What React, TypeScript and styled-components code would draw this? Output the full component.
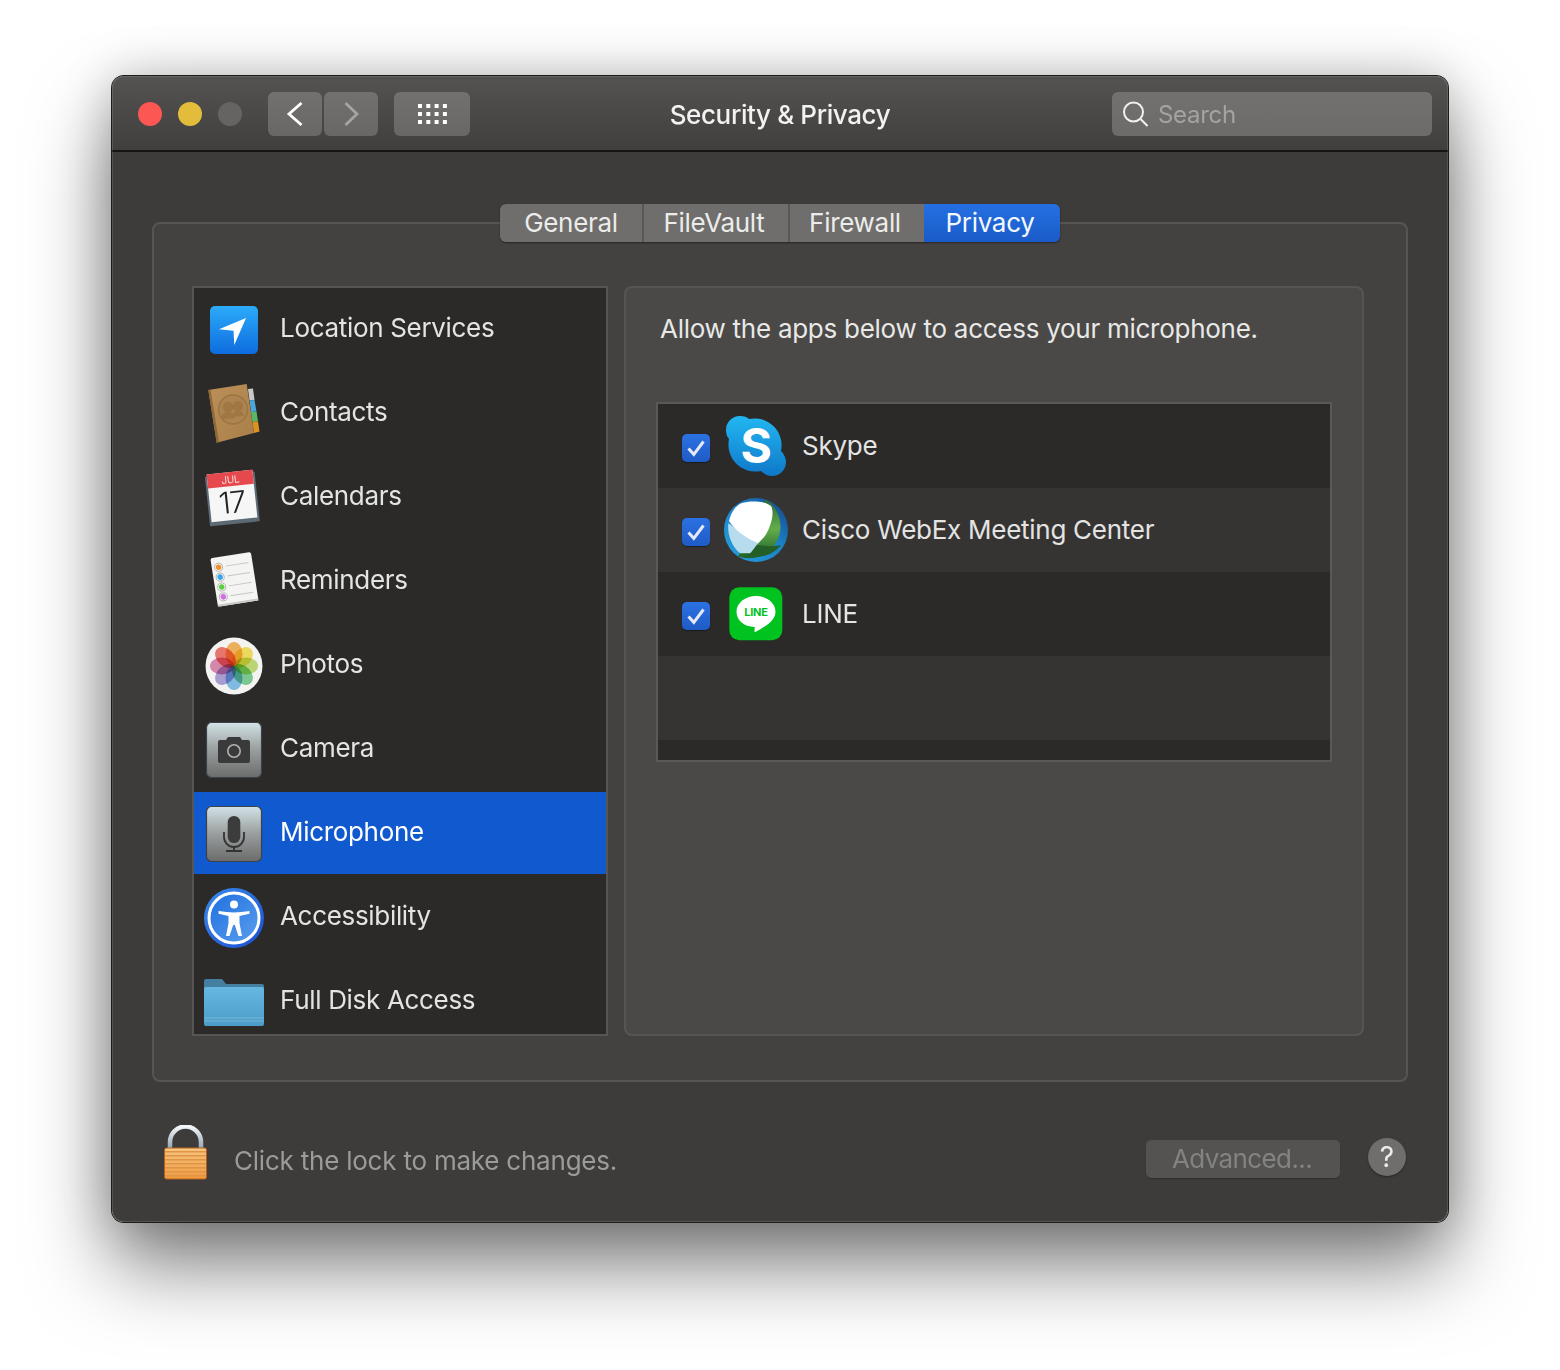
import React from 'react';
import styled, { createGlobalStyle } from 'styled-components';

const GlobalStyle = createGlobalStyle`
    html, body {
        margin: 0;
        padding: 0;
        background: #ffffff;
    }
    body {
        font-family: Inter, "Liberation Sans", sans-serif;
        -webkit-font-smoothing: antialiased;
    }
`;

const Page = styled.div`
    width: 1560px;
    height: 1370px;
    padding: 76px 112px 0;
    box-sizing: border-box;
    overflow: hidden;
`;

const Window = styled.div`
    width: 1336px;
    height: 1146px;
    box-sizing: border-box;
    border-radius: 12px;
    background: #3d3c3a;
    display: flex;
    flex-direction: column;
    overflow: hidden;
`;

const WindowFrame = styled.div`
    position: relative;
    width: 1336px;
    height: 1146px;
    border-radius: 12px;
    box-shadow: 0 0 0 1px #1c1c1b, 0 44px 80px rgba(0, 0, 0, 0.5), 0 0 50px rgba(0, 0, 0, 0.22);

    &::after {
        content: '';
        position: absolute;
        inset: 0;
        border-radius: 12px;
        box-shadow: inset 0 0 0 1px rgba(255, 255, 255, 0.12);
        pointer-events: none;
    }
`;

const TitleBar = styled.div`
    height: 76px;
    box-sizing: border-box;
    flex: none;
    display: grid;
    grid-template-columns: 1fr auto 1fr;
    align-items: center;
    padding: 2px 16px 0 26px;
    background: linear-gradient(#555351, #403f3d);
    border-bottom: 2px solid #141413;
`;

const TitleLeft = styled.div`
    display: flex;
    align-items: center;
`;

const Light = styled.span<{ $color: string }>`
    width: 24px;
    height: 24px;
    border-radius: 50%;
    margin-right: 16px;
    background: ${(p) => p.$color};
`;

const ToolButton = styled.div<{ $w: number }>`
    width: ${(p) => p.$w}px;
    height: 44px;
    border-radius: 6px;
    background: linear-gradient(#72716f, #686765);
    display: flex;
    align-items: center;
    justify-content: center;
`;

const NavGroup = styled.div`
    display: flex;
    gap: 2px;
    margin-left: 10px;
    margin-right: 16px;
`;

const Title = styled.div`
    font-size: 26px;
    font-weight: 500;
    color: #f2f2f2;
    letter-spacing: -0.38px;
    padding-right: 10px;
`;

const SearchBox = styled.div`
    justify-self: end;
    width: 320px;
    height: 44px;
    box-sizing: border-box;
    padding-left: 10px;
    border-radius: 6px;
    background: linear-gradient(#72716f, #6c6b69);
    display: flex;
    align-items: center;
    gap: 10px;
    font-size: 24px;
    color: #a3a3a1;
    letter-spacing: -0.3px;
`;

const Body = styled.div`
    flex: 1;
    padding: 70px 40px 0;
    display: flex;
    flex-direction: column;
`;

const TabPanel = styled.div`
    height: 860px;
    box-sizing: border-box;
    flex: none;
    border: 2px solid #565553;
    border-radius: 8px;
    background: #434240;
    padding: 0 42px 0 38px;
`;

const Tabs = styled.div`
    display: flex;
    width: 560px;
    height: 38px;
    margin: -20px auto 44px;
    border-radius: 6px;
    overflow: hidden;
    box-shadow: 0 1px 2px rgba(0, 0, 0, 0.45);
    position: relative;
    left: 2px;
`;

const Tab = styled.div<{ $w: number; $active?: boolean; $divider?: boolean; $pull?: number }>`
    width: ${(p) => p.$w}px;
    box-sizing: border-box;
    padding: 0 ${(p) => p.$pull ?? 0}px 1px 0;
    display: flex;
    align-items: center;
    justify-content: center;
    font-size: 26px;
    letter-spacing: -0.3px;
    color: ${(p) => (p.$active ? '#f4f7fd' : '#ececea')};
    background: ${(p) => (p.$active ? 'linear-gradient(#2470e2, #1a5bc8)' : '#6f6e6c')};
    border-right: ${(p) => (p.$divider ? '2px solid #595856' : 'none')};
`;

const Columns = styled.div`
    display: flex;
    gap: 16px;
    height: 750px;
`;

const Sidebar = styled.div`
    width: 416px;
    box-sizing: border-box;
    flex: none;
    border: 2px solid #565553;
    background: #2b2a29;
    overflow: hidden;
`;

const SideRow = styled.div<{ $selected?: boolean }>`
    height: 84px;
    display: flex;
    align-items: center;
    gap: 14px;
    padding-left: 8px;
    font-size: 26px;
    letter-spacing: -0.32px;
    color: ${(p) => (p.$selected ? '#ffffff' : '#e4e4e3')};
    background: ${(p) =>
        p.$selected ? 'linear-gradient(#1059cf 82px, #2b2a29 82px)' : 'transparent'};
`;

const RowLabel = styled.span`
    padding-bottom: 5px;
`;

const IconSvg = styled.svg.attrs({ width: 64, height: 64, viewBox: '0 0 64 64' })`
    flex: none;
    display: block;
    overflow: visible;
`;

const Petals = styled.g`
    ellipse {
        mix-blend-mode: multiply;
        opacity: 0.8;
    }
`;

const AppPanel = styled.div`
    width: 740px;
    box-sizing: border-box;
    flex: none;
    border: 2px solid #565553;
    border-radius: 8px;
    background: #4a4947;
    padding: 0 30px;
`;

const Heading = styled.div`
    height: 80px;
    margin: 0 0 34px 4px;
    display: flex;
    align-items: center;
    font-size: 26px;
    letter-spacing: -0.27px;
    color: #e8e8e7;
`;

const AppList = styled.div`
    height: 360px;
    box-sizing: border-box;
    border: 2px solid #5a5957;
    background: #2b2a29;
`;

const AppRow = styled.div<{ $alt?: boolean }>`
    height: 84px;
    display: flex;
    align-items: center;
    padding-left: 24px;
    font-size: 26px;
    letter-spacing: -0.27px;
    color: #e4e4e3;
    background: ${(p) => (p.$alt ? '#353433' : '#2b2a29')};
`;

const Checkbox = styled.span`
    width: 28px;
    height: 28px;
    margin: 4px 14px 0 0;
    flex: none;
    border-radius: 5px;
    background: linear-gradient(#2b71e3, #1f5bc6);
    box-shadow: 0 1px 1px rgba(0, 0, 0, 0.4);
    display: flex;
    align-items: center;
    justify-content: center;
`;

const AppName = styled.span`
    margin-left: 14px;
    padding-bottom: 2px;
`;

const Footer = styled.div`
    flex: 1;
    display: flex;
    align-items: center;
    padding: 0 2px 0 12px;
`;

const LockSvg = styled.svg.attrs({ width: 44, height: 56, viewBox: '0 0 44 56' })`
    flex: none;
    margin-top: 2px;
`;

const LockText = styled.div`
    margin: 16px auto 0 26px;
    font-size: 26px;
    letter-spacing: -0.22px;
    color: #9b9b99;
`;

const AdvancedButton = styled.div`
    width: 194px;
    height: 38px;
    box-sizing: border-box;
    padding: 0 2px 2px 0;
    margin-top: 14px;
    border-radius: 5px;
    background: #545352;
    box-shadow: 0 1px 1px rgba(0, 0, 0, 0.25);
    display: flex;
    align-items: center;
    justify-content: center;
    font-size: 26px;
    letter-spacing: -0.6px;
    color: #838381;
`;

const HelpButton = styled.div`
    width: 38px;
    height: 38px;
    margin: 10px 0 0 28px;
    border-radius: 50%;
    background: #6f6e6c;
    box-shadow: 0 1px 2px rgba(0, 0, 0, 0.4);
    display: flex;
    align-items: center;
    justify-content: center;
    font-size: 28px;
    color: #ececea;
`;

const LocationIcon = () => (
    <IconSvg>
        <defs>
            <linearGradient id="loc" x1="0" y1="0" x2="0" y2="1">
                <stop offset="0" stopColor="#2cabfa" />
                <stop offset="1" stopColor="#0e6cde" />
            </linearGradient>
        </defs>
        <rect x="8" y="8" width="48" height="48" rx="5" fill="url(#loc)" />
        <polygon points="44,20 32.3,47 31.5,32.7 17,31.3" fill="#fff" />
    </IconSvg>
);

const ContactsIcon = () => (
    <IconSvg>
        <defs>
            <linearGradient id="book" x1="0" y1="0" x2="1" y2="1">
                <stop offset="0" stopColor="#bb8f58" />
                <stop offset="1" stopColor="#a97f49" />
            </linearGradient>
        </defs>
        <polygon points="46,7 51,6.500 52.500,18 47.500,18.500" fill="#c9c9c9" />
        <polygon points="47.500,18.500 52.500,18 54.500,29.500 49,30" fill="#4aa7d8" />
        <polygon points="49,30 54.500,29.500 56,39.500 50.500,40" fill="#59b765" />
        <polygon points="50.500,40 56,39.500 57.500,49.500 52,51" fill="#dc921f" />
        <polygon points="6.300,8 44.700,2 52,51 14.700,60.700" fill="url(#book)" />
        <polygon points="6.300,8 8.500,7.700 17,60.100 14.700,60.700" fill="#8f6838" />
        <circle cx="31" cy="27.500" r="14.500" fill="#ad8350" stroke="#9c7443" strokeWidth="1.400" />
        <circle cx="26" cy="25" r="5.200" fill="#a07642" />
        <circle cx="36" cy="24" r="5.200" fill="#a07642" />
        <path d="M19 37c1-6 4-7 7-7s6 1 7 6zM30 35c1-5 3-6 6-6s5 1 6 5z" fill="#a07642" />
    </IconSvg>
);

const CalendarIcon = () => (
    <IconSvg>
        <g transform="rotate(-6 30 30)">
            <rect x="5" y="8" width="50" height="50" rx="1" fill="#5b6a75" />
            <rect x="7" y="6" width="46" height="48" fill="#f6f6f6" />
            <rect x="7" y="6" width="46" height="14" fill="#e5484d" />
            <text x="30" y="17" textAnchor="middle" fontFamily="Inter, sans-serif" fontWeight="300" fontSize="10" fill="#fff">
                JUL
            </text>
            <text x="29.500" y="47" textAnchor="middle" fontFamily="Inter, sans-serif" fontWeight="300" fontSize="30" letterSpacing="-1" fill="#222">
                17
            </text>
        </g>
    </IconSvg>
);

const RemindersIcon = () => {
    const dots = ['#f0902a', '#3ba6ee', '#5fd13f', '#cf6fe0'];
    return (
        <IconSvg>
            <g transform="rotate(-9 32 30)">
                <rect x="12" y="5" width="41" height="49" rx="2" fill="#f4f4f2" />
                <rect x="12" y="52" width="41" height="2" fill="#c9c9c7" />
                {dots.map((c, i) => (
                    <g key={c}>
                        <circle cx="18.800" cy={15 + i * 10} r="4" fill="#fff" stroke="#a5a5a5" strokeWidth="0.800" />
                        <circle cx="18.800" cy={15 + i * 10} r="2.800" fill={c} />
                        <line x1="26" y1={15 + i * 10} x2="49" y2={15 + i * 10} stroke="#c6c6c6" strokeWidth="1" />
                    </g>
                ))}
            </g>
        </IconSvg>
    );
};

const PhotosIcon = () => {
    const petals = ['#f7a63a', '#f5dc3c', '#b8d85a', '#63c57f', '#6ab3e6', '#9e8dd2', '#d872a2', '#ef5b4e'];
    return (
        <IconSvg>
            <circle cx="32" cy="32" r="28.500" fill="#f3f3f1" />
            <Petals>
                {petals.map((c, i) => (
                    <ellipse
                        key={c}
                        cx="32"
                        cy="20"
                        rx="8.500"
                        ry="12"
                        fill={c}
                        transform={`rotate(${i * 45} 32 32)`}
                    />
                ))}
            </Petals>
        </IconSvg>
    );
};

const TileGradient = ({ id }: { id: string }) => (
    <defs>
        <linearGradient id={id} x1="0" y1="0" x2="0" y2="1">
            <stop offset="0" stopColor="#d3e3e7" />
            <stop offset="0.45" stopColor="#9ea3a3" />
            <stop offset="1" stopColor="#6b6b6b" />
        </linearGradient>
    </defs>
);

const CameraIcon = () => (
    <IconSvg>
        <TileGradient id="cam" />
        <rect x="4.500" y="4.500" width="55" height="55" rx="5" fill="url(#cam)" stroke="#3b4248" strokeWidth="1.200" />
        <path d="M18 22h6l2-3h12l2 3h6a2 2 0 0 1 2 2v19a2 2 0 0 1-2 2H18a2 2 0 0 1-2-2V24a2 2 0 0 1 2-2z" fill="#3a3a3a" />
        <circle cx="32" cy="33" r="6.200" fill="none" stroke="#b2b2b0" strokeWidth="1.600" />
    </IconSvg>
);

const MicIcon = () => (
    <IconSvg>
        <TileGradient id="mic" />
        <rect x="4.500" y="4.500" width="55" height="55" rx="5" fill="url(#mic)" stroke="#3b4248" strokeWidth="1.200" />
        <rect x="25.700" y="14" width="12.600" height="27" rx="6.300" fill="#3c3c3c" />
        <path d="M22 30v5a10 10 0 0 0 20 0v-5" fill="none" stroke="#333" strokeWidth="1.800" />
        <path d="M32 45v4M24 49h16" fill="none" stroke="#333" strokeWidth="1.800" />
    </IconSvg>
);

const AccessibilityIcon = () => (
    <IconSvg>
        <defs>
            <linearGradient id="acc" x1="0" y1="0" x2="1" y2="1">
                <stop offset="0" stopColor="#3a8bec" />
                <stop offset="1" stopColor="#1a4fd0" />
            </linearGradient>
            <linearGradient id="accIn" x1="0" y1="0" x2="1" y2="1">
                <stop offset="0" stopColor="#1f6fe0" />
                <stop offset="1" stopColor="#5a9eec" />
            </linearGradient>
        </defs>
        <circle cx="32" cy="32" r="30" fill="url(#acc)" />
        <circle cx="32" cy="32" r="25" fill="url(#accIn)" stroke="#fff" strokeWidth="3" />
        <circle cx="32" cy="18.400" r="4" fill="#fff" />
        <path d="M16.500 25C22 25.500 27 26.500 32 26.500S42 25.500 47.500 25V27.700L37.500 30V37L40 50H36.500L32.800 39H31.200L27.500 50H24L26.500 37V30L16.500 27.700Z" fill="#fff" />
    </IconSvg>
);

const FolderIcon = () => (
    <IconSvg>
        <defs>
            <linearGradient id="fold" x1="0" y1="0" x2="0" y2="1">
                <stop offset="0" stopColor="#66b8e2" />
                <stop offset="1" stopColor="#4b9cc8" />
            </linearGradient>
        </defs>
        <path d="M2 11a2 2 0 0 1 2-2h16l4 5h36a2 2 0 0 1 2 2v8H2z" fill="#447f9f" />
        <rect x="2" y="17" width="60" height="39" rx="2" fill="url(#fold)" />
        <path d="M2 48h60M2 51h60" stroke="#80bcd9" strokeWidth="0.800" />
    </IconSvg>
);

const SkypeIcon = () => (
    <IconSvg>
        <defs>
            <linearGradient id="sky" x1="0" y1="0" x2="0" y2="1">
                <stop offset="0" stopColor="#22b7f2" />
                <stop offset="1" stopColor="#0f78c9" />
            </linearGradient>
        </defs>
        <path
            d="M16 2c4 0 7 1 9 3a27 27 0 0 1 32 32c3 3 5 7 5 11a14 14 0 0 1-14 14c-4 0-8-2-11-5A27 27 0 0 1 5 25c-2-2-3-5-3-9A14 14 0 0 1 16 2z"
            fill="url(#sky)"
        />
        <text x="32" y="49" textAnchor="middle" fontFamily="Inter, sans-serif" fontWeight="700" fontSize="48" fill="#fff">
            S
        </text>
    </IconSvg>
);

const WebexIcon = () => (
    <IconSvg>
        <defs>
            <linearGradient id="wxBlue" x1="0" y1="1" x2="1" y2="0">
                <stop offset="0" stopColor="#27a0e0" />
                <stop offset="0.6" stopColor="#1b7fc4" />
                <stop offset="1" stopColor="#173d80" />
            </linearGradient>
            <linearGradient id="wxGreen" x1="0" y1="0" x2="0" y2="1">
                <stop offset="0" stopColor="#2d6b30" />
                <stop offset="0.5" stopColor="#62ad4b" />
                <stop offset="1" stopColor="#1f6028" />
            </linearGradient>
        </defs>
        <circle cx="32" cy="32" r="32" fill="url(#wxBlue)" />
        <path d="M42 1.600A32 32 0 0 1 14 58.600Z" fill="url(#wxGreen)" />
        <path d="M16 55c8 1 10 4 16 4 10 0 20-5 25-12-8 2-16 1-24 0z" fill="#235f27" />
        <path d="M4.300 25.300L34.300 45.300C30 50 28 54 26 55.300H16C9 50 3 38 4.300 25.300z" fill="#b6dcee" />
        <path d="M5 23C7 14 12 7 18 5c6-2 22-3 29 3 3 5 2 16-6 30l-6.700 7.300C26 42 12 34 5 23z" fill="#fff" />
    </IconSvg>
);

const LineIcon = () => (
    <IconSvg>
        <rect x="5.300" y="5.300" width="53" height="53" rx="10" fill="#00c31f" />
        <path
            d="M32 14c10.800 0 19.500 7 19.500 15.700 0 5.500-4 10-9 13.500-3.500 2.500-8 5-11 6.800-.8.400-1.200-.5-1-1.500l.3-3.500C19.500 44.600 12.500 38 12.500 29.700 12.500 21 21.200 14 32 14z"
            fill="#fff"
        />
        <text x="32" y="34" textAnchor="middle" fontFamily="Inter, sans-serif" fontWeight="700" fontSize="11" fill="#00c31f">
            LINE
        </text>
    </IconSvg>
);

const Check = () => (
    <svg width="20" height="18" viewBox="0 0 20 18">
        <path d="M2.500 9.500L7.800 15.300 17.500 2.500" fill="none" stroke="#e3e9f6" strokeWidth="3" />
    </svg>
);

const sections: { name: string; icon: React.ReactElement; selected?: boolean }[] = [
    { name: 'Location Services', icon: <LocationIcon /> },
    { name: 'Contacts', icon: <ContactsIcon /> },
    { name: 'Calendars', icon: <CalendarIcon /> },
    { name: 'Reminders', icon: <RemindersIcon /> },
    { name: 'Photos', icon: <PhotosIcon /> },
    { name: 'Camera', icon: <CameraIcon /> },
    { name: 'Microphone', icon: <MicIcon />, selected: true },
    { name: 'Accessibility', icon: <AccessibilityIcon /> },
    { name: 'Full Disk Access', icon: <FolderIcon /> },
];

const apps = [
    { name: 'Skype', icon: <SkypeIcon /> },
    { name: 'Cisco WebEx Meeting Center', icon: <WebexIcon /> },
    { name: 'LINE', icon: <LineIcon /> },
];

const App = () => (
    <Page>
        <GlobalStyle />
        <WindowFrame>
            <Window>
                <TitleBar>
                    <TitleLeft>
                        <Light $color="#fc5753" />
                        <Light $color="#e4bc3b" />
                        <Light $color="#656463" />
                        <NavGroup>
                            <ToolButton $w={54}>
                                <svg width="54" height="44" viewBox="0 0 54 44">
                                    <path d="M33.500 11L21 22l12.500 11" fill="none" stroke="#fff" strokeWidth="2.800" />
                                </svg>
                            </ToolButton>
                            <ToolButton $w={54}>
                                <svg width="54" height="44" viewBox="0 0 54 44">
                                    <path d="M21.500 11L33 22 21.500 33" fill="none" stroke="#a5a4a2" strokeWidth="2.800" />
                                </svg>
                            </ToolButton>
                        </NavGroup>
                        <ToolButton $w={76}>
                            <svg width="30" height="22" viewBox="0 0 30 22">
                                {[0, 1, 2].map((r) =>
                                    [0, 1, 2, 3].map((c) => (
                                        <rect key={`${r}-${c}`} x={c * 8.300 + 1} y={r * 8 + 1} width="4" height="4" fill="#fff" />
                                    )),
                                )}
                            </svg>
                        </ToolButton>
                    </TitleLeft>
                    <Title>Security &amp; Privacy</Title>
                    <SearchBox>
                        <svg width="26" height="26" viewBox="0 0 26 26">
                            <circle cx="11.500" cy="11" r="9.500" fill="none" stroke="#f0f0f0" strokeWidth="2" />
                            <path d="M18.500 18l7 7" fill="none" stroke="#f0f0f0" strokeWidth="2" />
                        </svg>
                        Search
                    </SearchBox>
                </TitleBar>
                <Body>
                    <TabPanel>
                        <Tabs>
                            <Tab $w={144} $divider>General</Tab>
                            <Tab $w={146} $divider $pull={4}>FileVault</Tab>
                            <Tab $w={134} $pull={4}>Firewall</Tab>
                            <Tab $w={136} $active $pull={4}>Privacy</Tab>
                        </Tabs>
                        <Columns>
                            <Sidebar>
                                {sections.map((s) => (
                                    <SideRow key={s.name} $selected={s.selected}>
                                        {s.icon}
                                        <RowLabel>{s.name}</RowLabel>
                                    </SideRow>
                                ))}
                            </Sidebar>
                            <AppPanel>
                                <Heading>Allow the apps below to access your microphone.</Heading>
                                <AppList>
                                    {apps.map((a, i) => (
                                        <AppRow key={a.name} $alt={i % 2 === 1}>
                                            <Checkbox>
                                                <Check />
                                            </Checkbox>
                                            {a.icon}
                                            <AppName>{a.name}</AppName>
                                        </AppRow>
                                    ))}
                                    <AppRow $alt />
                                </AppList>
                            </AppPanel>
                        </Columns>
                    </TabPanel>
                    <Footer>
                        <LockSvg>
                            <defs>
                                <linearGradient id="shackle" x1="0" y1="0" x2="0" y2="1">
                                    <stop offset="0" stopColor="#f4f6f8" />
                                    <stop offset="1" stopColor="#8fa3b4" />
                                </linearGradient>
                                <linearGradient id="lockBody" x1="0" y1="0" x2="0" y2="1">
                                    <stop offset="0" stopColor="#f7c781" />
                                    <stop offset="1" stopColor="#f09a3c" />
                                </linearGradient>
                            </defs>
                            <path d="M6 24V17a15.500 15.500 0 0 1 31 0v7" fill="none" stroke="url(#shackle)" strokeWidth="4.500" />
                            <rect x="0.500" y="23" width="42" height="31" rx="2" fill="url(#lockBody)" stroke="#b5611c" strokeWidth="1" />
                            {[0, 1, 2, 3, 4, 5, 6].map((i) => (
                                <rect key={i} x="1" y={26 + i * 4} width="41" height="1.500" fill="#e0944a" />
                            ))}
                        </LockSvg>
                        <LockText>Click the lock to make changes.</LockText>
                        <AdvancedButton>Advanced...</AdvancedButton>
                        <HelpButton>?</HelpButton>
                    </Footer>
                </Body>
            </Window>
        </WindowFrame>
    </Page>
);

export default App;
